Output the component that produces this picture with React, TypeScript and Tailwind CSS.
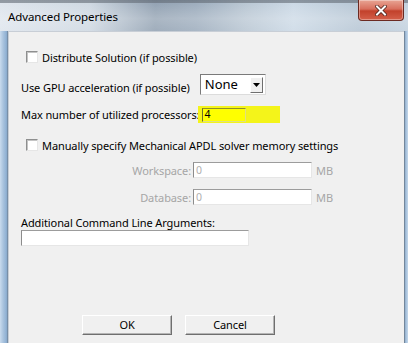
import React from "react";

function CheckBox() {
  return (
    <span className="inline-block w-[12px] h-[12px] bg-white border border-t-[#8e8f8f] border-l-[#8e8f8f] border-r-[#e6e6e6] border-b-[#e6e6e6] shadow-[inset_1px_1px_0_#c4c4c4]" />
  );
}

function Field({ w, value, disabled }: { w: string; value?: string; disabled?: boolean }) {
  return (
    <div
      className={`${w} h-[16px] bg-white border border-t-[#9c9c9c] border-l-[#8c8c8c] border-r-[#e6e6e6] border-b-[#e6e6e6] flex items-center pl-[2px] text-[10.5px] leading-none ${disabled ? "text-[#b0b0b0]" : "text-black"}`}
    >
      {value}
    </div>
  );
}

function Btn({ label }: { label: string }) {
  return (
    <div className="w-[90px] h-[20px] bg-[#f0f0f0] border border-t-white border-l-white border-r-[#6f6f6f] border-b-[#6f6f6f] shadow-[inset_-1px_-1px_0_#b5b5b5] flex items-center justify-center text-black">
      {label}
    </div>
  );
}

export default function App() {
  return (
    <div className="w-[408px] h-[343px] overflow-hidden flex flex-col font-['Noto_Sans',sans-serif] text-[11px] tracking-[-0.1px] text-black bg-[#b9cde0]">
      {/* Title bar */}
      <div className="h-[31px] relative flex justify-between items-start bg-[linear-gradient(90deg,#dde4ec_0%,#cdd7e1_22%,#8f9fb0_38%,#9aaabb_48%,#b6c4d1_60%,#cad8e5_72%,#b4c4d3_88%,#c0cfdd_100%)]">
        <div className="absolute inset-x-0 top-0 h-[3px] bg-[#5d6670] opacity-60" />
        <div className="absolute inset-0 bg-[linear-gradient(180deg,rgba(255,255,255,0)_0%,rgba(255,255,255,0.25)_60%,rgba(255,255,255,0.15)_100%)]" />
        <span className="relative pl-[8px] pt-[9px] text-[11.5px] leading-[16px] text-black">Advanced Properties</span>
        <div className="relative mr-[4px] w-[46px] h-[21px] rounded-b-[4px] border border-t-0 border-[#6b2a22] bg-[linear-gradient(180deg,#e8a594_0%,#d86f5d_45%,#c2412b_55%,#d4604a_100%)] flex items-center justify-center shadow-[inset_0_0_0_1px_rgba(255,255,255,0.35)]">
          <svg width="12" height="11" viewBox="0 0 12 11">
            <path d="M2 1.5 L10 9.5 M10 1.5 L2 9.5" stroke="#4a2019" strokeWidth="3.6" strokeLinecap="square" />
            <path d="M2 1.5 L10 9.5 M10 1.5 L2 9.5" stroke="#ffffff" strokeWidth="2" strokeLinecap="square" />
          </svg>
        </div>
      </div>

      {/* Body */}
      <div className="flex-1 flex">
        <div className="w-[8px] bg-[linear-gradient(90deg,#c9dbee_0%,#a9c3de_40%,#8fb0d3_80%,#6d7f93_100%)]" />
        <div className="flex-1 bg-[#f0f0f0] border-l border-t border-[#c8ced6] flex flex-col pl-[12px]">
          {/* Row 1 */}
          <div className="mt-[18px] h-[13px] flex items-center ml-[5px]">
            <CheckBox />
            <span className="ml-[4px] leading-none mt-[1px]">Distribute Solution (if possible)</span>
          </div>

          {/* Row 2 */}
          <div className="mt-[11px] h-[21px] flex items-center">
            <span className="leading-none mt-[5px]">Use GPU acceleration (if possible)</span>
            <div className="ml-[10px] w-[66px] h-[21px] bg-white border border-t-[#7a7a7a] border-l-[#7a7a7a] border-r-[#dcdcdc] border-b-[#dcdcdc] flex items-center justify-between pl-[4px] pr-[2px]">
              <span className="text-[13px] leading-none tracking-normal">None</span>
              <div className="w-[13px] h-[16px] bg-[#f0f0f0] border border-t-white border-l-white border-r-[#6f6f6f] border-b-[#6f6f6f] flex items-center justify-center">
                <svg width="7" height="4" viewBox="0 0 7 4">
                  <path d="M0 0 H7 L3.5 4 Z" fill="#000" />
                </svg>
              </div>
            </div>
          </div>

          {/* Row 3 */}
          <div className="mt-[11px] h-[17px] flex items-center">
            <span className="leading-none">Max number of utilized processors:</span>
            <div className="ml-[-1px] w-[82px] h-[17px] bg-[#f4f41a] flex items-center pl-[4px]">
              <div className="w-[44px] h-[14px] bg-[#ffff00] border border-t-[#8f8f2a] border-l-[#6f6f2a] border-r-[#e0e080] border-b-[#e0e080] flex items-center pl-[1px] text-[10.5px] leading-none">
                4
              </div>
            </div>
          </div>

          {/* Row 4 */}
          <div className="mt-[15px] h-[13px] flex items-center ml-[5px]">
            <CheckBox />
            <span className="ml-[4px] leading-none mt-[2px]">Manually specify Mechanical APDL solver memory settings</span>
          </div>

          {/* Row 5 */}
          <div className="mt-[11px] h-[16px] flex items-center">
            <span className="w-[172px] text-right pr-[2px] text-[#a6a6a6] leading-none">Workspace:</span>
            <Field w="w-[119px]" value="0" disabled />
            <span className="ml-[4px] text-[#a6a6a6] leading-none">MB</span>
          </div>

          {/* Row 6 */}
          <div className="mt-[11px] h-[16px] flex items-center">
            <span className="w-[172px] text-right pr-[2px] text-[#a6a6a6] leading-none">Database:</span>
            <Field w="w-[119px]" value="0" disabled />
            <span className="ml-[4px] text-[#a6a6a6] leading-none">MB</span>
          </div>

          {/* Row 7 */}
          <div className="mt-[10px] h-[14px] flex items-center">
            <span className="leading-none">Additional Command Line Arguments:</span>
          </div>

          {/* Row 8 */}
          <div className="mt-[1px]">
            <Field w="w-[228px]" />
          </div>

          {/* Buttons */}
          <div className="mt-[69px] ml-[61px] flex gap-[13px]">
            <Btn label="OK" />
            <Btn label="Cancel" />
          </div>
        </div>
        <div className="w-[4px] bg-[linear-gradient(90deg,#5f6f80_0%,#9fbbd8_40%,#c4d7ea_100%)]" />
      </div>
    </div>
  );
}
